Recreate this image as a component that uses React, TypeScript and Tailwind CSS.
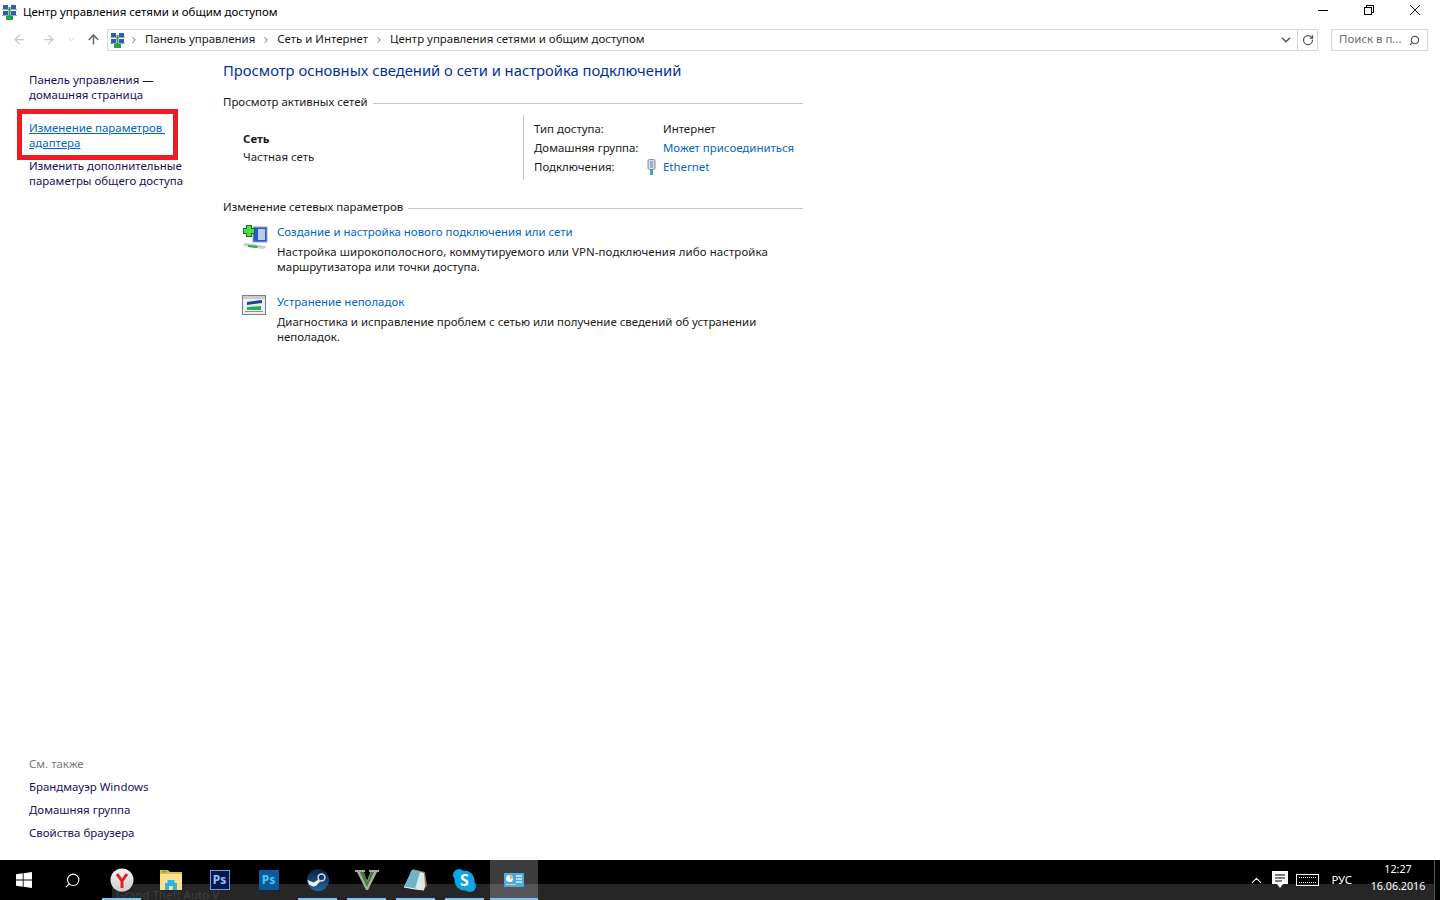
import { ArrowLeft, ArrowRight, ArrowUp, ChevronDown, ChevronRight, ChevronUp, RotateCw, Search } from "lucide-react";

const font = "font-['Noto_Sans','Open_Sans',sans-serif]";

function NetIcon() {
  return (
    <svg width="15" height="16" viewBox="0 0 15 16">
      <rect x="1" y="1" width="5" height="4" fill="#2b5fb8" />
      <rect x="9" y="1" width="5" height="4" fill="#2b5fb8" />
      <rect x="1" y="7" width="5" height="4" fill="#2b5fb8" />
      <rect x="9" y="7" width="5" height="4" fill="#2b5fb8" />
      <path d="M0 5.5h15M0 11.5h15" stroke="#9aa7b5" />
      <path d="M7.5 3v9" stroke="#2f9e3f" strokeWidth="2" />
      <rect x="4" y="12" width="7" height="4" fill="#23a53c" />
    </svg>
  );
}

function NewConnIcon() {
  return (
    <svg width="26" height="26" viewBox="0 0 26 26">
      <rect x="11" y="3" width="14" height="15" fill="#2d55c4" stroke="#8fa6c8" />
      <rect x="16" y="5" width="7" height="11" fill="#b6cdf2" />
      <path d="M7 1v12M1 7h12" stroke="#0f7a1e" strokeWidth="6" />
      <path d="M7 2v10M2 7h10" stroke="#58d84a" strokeWidth="4" />
      <path d="M1 20l4-1 18 3 1 2-4 1L2 22z" fill="#c9ced4" />
      <path d="M6 21l10 1-1 2-9-1z" fill="#22b04a" />
    </svg>
  );
}

function TroubleIcon() {
  return (
    <svg width="24" height="20" viewBox="0 0 24 20">
      <rect x="0.5" y="0.5" width="23" height="19" fill="#eef1f3" stroke="#7a7f85" />
      <rect x="1" y="1" width="22" height="3" fill="#c9ced3" />
      <path d="M5 7l15-2v3L5 10z" fill="#1f3f9e" />
      <path d="M5 12l14-1v4H5z" fill="#27b24e" />
      <path d="M3 16.5h18" stroke="#8a9098" />
    </svg>
  );
}

function WinLogo() {
  return (
    <svg width="16" height="16" viewBox="0 0 16 16" fill="#fff">
      <path d="M0 2.3l6.8-1v6.3H0zM7.6 1.2L16 0v7.6H7.6zM0 8.4h6.8v6.3L0 13.7zM7.6 8.4H16V16l-8.4-1.2z" />
    </svg>
  );
}

function Yandex() {
  return (
    <svg width="24" height="24" viewBox="0 0 24 24">
      <defs>
        <linearGradient id="ya" x1="0" y1="0" x2="0" y2="1">
          <stop offset="0" stopColor="#f6f5f4" />
          <stop offset="1" stopColor="#cfcdcb" />
        </linearGradient>
      </defs>
      <circle cx="12" cy="12" r="11.5" fill="url(#ya)" />
      <path d="M7 6l5 7 5-7M12 12.5V20" fill="none" stroke="#e3202a" strokeWidth="3" />
    </svg>
  );
}

function Folder() {
  return (
    <svg width="22" height="22" viewBox="0 0 22 22">
      <path d="M0 1h8l2 2h12v18H0z" fill="#e8b84a" />
      <path d="M0 5h22v16H0z" fill="#fbe08d" />
      <rect x="2" y="1.5" width="5" height="2" fill="#5bb84a" />
      <path d="M5 21v-7h2.5v-3h7v3H17v7h-4v-4H9v4z" fill="#2fb4ea" />
    </svg>
  );
}

function PsDark() {
  return (
    <div className="flex h-[20px] w-[20px] items-center justify-center border border-[#6b9fe0] bg-[#0a1650] text-[12px] leading-none font-bold text-[#8ec5f5]">
      Ps
    </div>
  );
}

function PsBlue() {
  return (
    <div className="flex h-[20px] w-[20px] items-center justify-center rounded-[1px] bg-[#075a9c] text-[12px] leading-none font-bold text-[#52c1f5]">
      Ps
    </div>
  );
}

function Steam() {
  return (
    <svg width="22" height="22" viewBox="0 0 22 22">
      <defs>
        <linearGradient id="st" x1="0" y1="0" x2="0" y2="1">
          <stop offset="0" stopColor="#0f1c3a" />
          <stop offset="1" stopColor="#1c6aa8" />
        </linearGradient>
      </defs>
      <circle cx="11" cy="11" r="11" fill="url(#st)" />
      <circle cx="14.5" cy="8.5" r="3.4" fill="none" stroke="#d5dde6" strokeWidth="1.5" />
      <path d="M0.5 11l6 2.5 5-3 1.5 2-4 4.5-3 .5-4-2z" fill="#eef3f7" />
    </svg>
  );
}

function GtaV() {
  return (
    <svg width="24" height="20" viewBox="0 0 24 20">
      <path d="M0 0h10v2H8.5L12 11l3.5-9H14V0h10v2h-2l-9 18h-2L2 2H0z" fill="#a9ada5" />
      <path d="M5 2h4l3.5 10L16 2h3l-7 15z" fill="#3d7f2a" />
    </svg>
  );
}

function Notepad() {
  return (
    <svg width="23" height="22" viewBox="0 0 23 22">
      <path d="M8 0l13 3 2 14-3 3z" fill="#a37b3f" />
      <path d="M8 1l12 3 1 13-1 4-20-3z" fill="#d6e9ec" />
      <path d="M8 1l8 2-5 17-11-2z" fill="#6fb3c6" />
      <path d="M0 18l11 2 9 1" stroke="#f1f5f5" fill="none" />
    </svg>
  );
}

function Skype() {
  return (
    <div className="relative flex h-[23px] w-[23px] items-center justify-center text-[16px] leading-none font-bold text-white">
      <svg className="absolute inset-0" width="23" height="23" viewBox="0 0 23 23" fill="#0ba5e8">
        <circle cx="11.5" cy="11.5" r="10" />
        <circle cx="6" cy="6" r="6" />
        <circle cx="17" cy="17" r="6" />
      </svg>
      <span className="relative">S</span>
    </div>
  );
}

function PanelIcon() {
  return (
    <svg width="20" height="14" viewBox="0 0 20 14">
      <rect width="20" height="14" fill="#4aa8ea" />
      <circle cx="5.5" cy="5.5" r="3.5" fill="#fff" />
      <path d="M5.5 5.5V2a3.5 3.5 0 0 1 3.5 3.5z" fill="#f3b03c" />
      <path d="M12 3h6M12 6h6M12 9h6" stroke="#dff1ff" strokeWidth="1.4" />
      <path d="M2 11.5h10" stroke="#f3d35a" />
    </svg>
  );
}

const taskItems = [
  { icon: <Yandex />, running: true },
  { icon: <Folder />, running: false },
  { icon: <PsDark />, running: false },
  { icon: <PsBlue />, running: false },
  { icon: <Steam />, running: true },
  { icon: <GtaV />, running: true },
  { icon: <Notepad />, running: true },
  { icon: <Skype />, running: true },
];

function SideLink({ children, className = "" }: { children: React.ReactNode; className?: string }) {
  return <div className={`text-[11.45px] leading-[15px] ${className}`}>{children}</div>;
}

function SectionHead({ title }: { title: string }) {
  return (
    <div className="flex items-center gap-[5px] text-[11.45px] leading-[15px] text-[#1a1a1a]">
      <span>{title}</span>
      <div className="mt-[4px] h-px flex-1 bg-[#c8c8c8]" />
    </div>
  );
}

export default function App() {
  return (
    <div className={`flex h-screen w-[1440px] flex-col overflow-hidden bg-white ${font}`}>
      <div className="flex h-[24px] items-center pr-[2px] pl-[2px]">
        <NetIcon />
        <span className="ml-[6px] text-[11.45px] text-black">Центр управления сетями и общим доступом</span>
        <div className="ml-auto flex items-center pb-[4px] text-black">
          <svg className="w-[46px]" width="46" height="12" viewBox="0 0 46 12" shapeRendering="crispEdges">
            <path d="M18 6.5h10" stroke="#000" />
          </svg>
          <svg className="w-[46px]" width="46" height="12" viewBox="0 0 46 12" shapeRendering="crispEdges">
            <path d="M18.5 3.5h7v7h-7zM20.5 3.5v-2h7v7h-2" fill="none" stroke="#000" />
          </svg>
          <svg className="w-[46px]" width="46" height="12" viewBox="0 0 46 12">
            <path d="M18 1l10 10M28 1L18 11" stroke="#000" strokeWidth="0.9" fill="none" />
          </svg>
        </div>
      </div>

      <div className="flex h-[28px] items-start pt-[5px] pl-[12px] text-[#c9c9c9]">
        <ArrowLeft size={15} className="mt-[3px]" />
        <ArrowRight size={15} className="mt-[3px] ml-[14px]" />
        <ChevronDown size={9} className="mt-[6px] ml-[11px]" />
        <ArrowUp size={15} strokeWidth={2.5} className="mt-[3px] ml-[10px] text-[#6b6b6b]" />
        <div className="ml-[6px] flex h-[22px] w-[1211px] items-center border border-[#d9d9d9] pl-[2px]">
          <NetIcon />
          <ChevronRight size={10} className="ml-[4px] text-[#555]" />
          <span className="-mt-[2px] ml-[6px] text-[11.45px] text-[#1a1a1a]">Панель управления</span>
          <ChevronRight size={10} className="ml-[6px] text-[#555]" />
          <span className="-mt-[2px] ml-[6px] text-[11.45px] text-[#1a1a1a]">Сеть и Интернет</span>
          <ChevronRight size={10} className="ml-[6px] text-[#555]" />
          <span className="-mt-[2px] ml-[6px] text-[11.45px] text-[#1a1a1a]">Центр управления сетями и общим доступом</span>
          <div className="ml-auto flex h-full items-center">
            <ChevronDown size={14} strokeWidth={2.5} className="mr-[4px] text-[#555]" />
            <div className="flex h-full w-[20px] items-center justify-center border-l border-[#d9d9d9]">
              <RotateCw size={12} strokeWidth={2.5} className="text-[#555]" />
            </div>
          </div>
        </div>
        <div className="ml-[13px] flex h-[22px] w-[97px] items-center justify-between border border-[#d9d9d9] pr-[7px] pl-[7px]">
          <span className="-mt-[2px] text-[11.45px] text-[#6d6d6d]">Поиск в п...</span>
          <Search size={11} strokeWidth={2.5} className="-scale-x-100 text-[#555]" />
        </div>
      </div>

      <div className="flex flex-1">
        <div className="flex w-[223px] flex-col justify-between pt-[20px] pb-[20px] pl-[29px] text-[#1a0f5e]">
          <div>
            <SideLink>Панель управления —<br />домашняя страница</SideLink>
            <SideLink className="mt-[18px] text-[#0066cc] underline">Изменение параметров{"\u00a0"}<br />адаптера</SideLink>
            <SideLink className="mt-[8px]">Изменить дополнительные<br />параметры общего доступа</SideLink>
          </div>
          <div className="flex flex-col gap-[8px]">
            <SideLink className="text-[#7a7a7a]">См. также</SideLink>
            <SideLink>Брандмауэр Windows</SideLink>
            <SideLink>Домашняя группа</SideLink>
            <SideLink>Свойства браузера</SideLink>
          </div>
        </div>

        <div className="w-[580px] pt-[6px]">
          <h1 className="text-[14.75px] leading-[24px] font-normal text-[#003399]">
            Просмотр основных сведений о сети и настройка подключений
          </h1>
          <div className="mt-[12px]"><SectionHead title="Просмотр активных сетей" /></div>

          <div className="mt-[6px] flex h-[65px]">
            <div className="w-[300px] pt-[16px] pl-[20px] text-[11.45px] leading-[15px] text-[#1a1a1a]">
              <div className="font-bold">Сеть</div>
              <div className="mt-[3px]">Частная сеть</div>
            </div>
            <div className="grid flex-1 grid-cols-[129px_1fr] content-start gap-y-[4px] border-l border-[#c8c8c8] pt-[6px] pl-[10px] text-[11.45px] leading-[15px] text-[#1a1a1a]">
              <div>Тип доступа:</div>
              <div>Интернет</div>
              <div>Домашняя группа:</div>
              <div className="text-[#0066cc]">Может присоединиться</div>
              <div>Подключения:</div>
              <div className="relative text-[#0066cc]">
                <svg className="absolute top-0 -left-[16px]" width="9" height="16" viewBox="0 0 9 16">
                  <rect x="1" y="0.5" width="7" height="10" rx="1.5" fill="#d5dde6" stroke="#7d8ea3" />
                  <rect x="3" y="2" width="3" height="7" fill="#9fb2c8" />
                  <path d="M4.5 11v5" stroke="#3aa0e0" strokeWidth="3" />
                </svg>
                Ethernet
              </div>
            </div>
          </div>

          <div className="mt-[19px]"><SectionHead title="Изменение сетевых параметров" /></div>

          <div className="mt-[10px] flex">
            <div className="w-[54px] pl-[19px]"><NewConnIcon /></div>
            <div className="text-[11.45px] leading-[15px] text-[#1a1a1a]">
              <div className="text-[#0066cc]">Создание и настройка нового подключения или сети</div>
              <div className="mt-[5px]">
                <span className="tracking-[0.09px]">Настройка широкополосного, коммутируемого или VPN-подключения либо настройка</span><br />
                маршрутизатора или точки доступа.
              </div>
            </div>
          </div>

          <div className="mt-[20px] flex">
            <div className="w-[54px] pt-[1px] pl-[19px]"><TroubleIcon /></div>
            <div className="text-[11.45px] leading-[15px] text-[#1a1a1a]">
              <div className="text-[#0066cc]">Устранение неполадок</div>
              <div className="mt-[5px]">
                Диагностика и исправление проблем с сетью или получение сведений об устранении<br />
                неполадок.
              </div>
            </div>
          </div>
        </div>
      </div>

      <div className="relative flex h-[40px] items-stretch bg-black">
        <div className="absolute right-[6px] bottom-0 left-[112px] h-[16px] overflow-hidden bg-[#262626] pl-[4px] text-[11.5px] leading-[22px] text-[#3f3f3f]">
          Grand Theft Auto V
        </div>
        <div className="relative flex w-[48px] items-center justify-center"><WinLogo /></div>
        <div className="relative flex w-[49px] items-center justify-center">
          <Search size={17} strokeWidth={1.5} className="-scale-x-100 text-white" />
        </div>
        {taskItems.map((t, i) => (
          <div key={i} className="relative flex w-[49px] items-center justify-center">
            {t.icon}
            {t.running && <div className="absolute inset-x-[5px] bottom-0 h-[2px] bg-[#76c7f5]" />}
          </div>
        ))}
        <div className="relative ml-[1px] flex w-[48px] items-center justify-center bg-[#3c3c3c]">
          <div className="absolute inset-x-0 bottom-0 h-[16px] bg-[#565656]" />
          <div className="relative"><PanelIcon /></div>
          <div className="absolute inset-x-0 bottom-0 h-[2px] bg-[#76c7f5]" />
        </div>
        <div className="relative ml-auto flex items-center pr-[5px] text-white">
          <ChevronUp size={17} strokeWidth={1.5} />
          <svg className="ml-[7px]" width="16" height="18" viewBox="0 0 16 18" fill="#fff">
            <path d="M0 0h16v13h-5l-3 4-3-4H0z" />
            <path d="M3 4h10M3 7h10M3 10h7" stroke="#000" />
          </svg>
          <div className="ml-[8px] flex h-[12px] w-[23px] items-center justify-center border border-white">
            <div className="h-[6px] w-[17px] border-y border-dotted border-white" />
          </div>
          <span className="ml-[12px] text-[11.45px]">РУС</span>
          <div className="ml-[18px] w-[56px] pb-[4px] text-center text-[10.7px] leading-[17px]">
            12:27<br />16.06.2016
          </div>
          <div className="ml-[8px] h-full w-px bg-[#555]" />
        </div>
      </div>

      <div className="pointer-events-none absolute top-[109px] left-[17px] h-[51px] w-[161px] border-[5px] border-[#ed1c24]" />
    </div>
  );
}
